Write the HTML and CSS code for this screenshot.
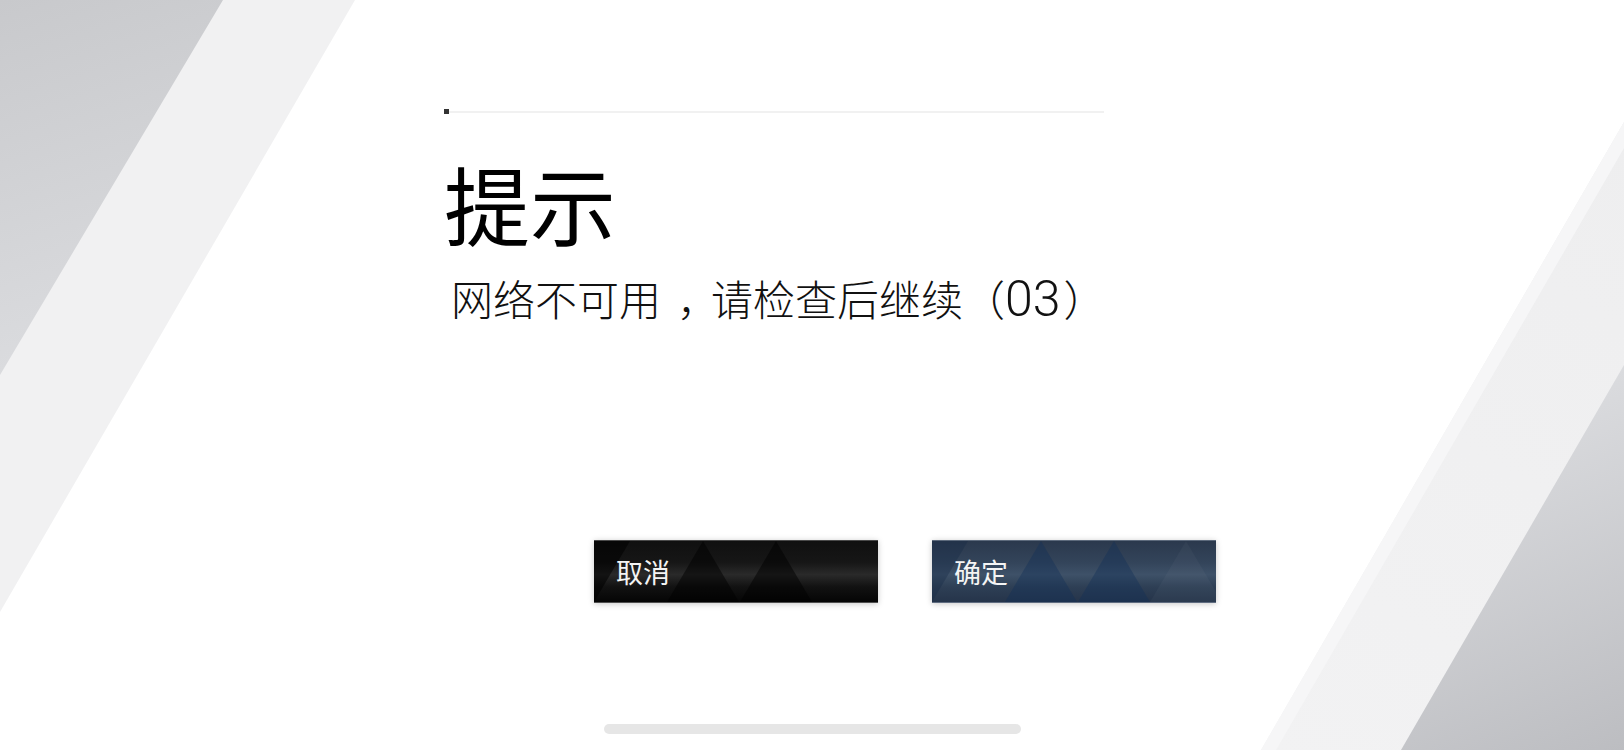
FILE: index.html
```html
<!DOCTYPE html>
<html lang="zh-CN">
<head>
<meta charset="utf-8">
<title>提示</title>
<link rel="stylesheet" href="styles.css">
</head>
<body>
<svg class="backdrop" viewBox="0 0 1624 750" preserveAspectRatio="none" aria-hidden="true">
  <defs>
    <linearGradient id="leftDark" x1="0" y1="0" x2="120" y2="375" gradientUnits="userSpaceOnUse">
      <stop offset="0" stop-color="#c8c9cc"/>
      <stop offset="1" stop-color="#dcdde0"/>
    </linearGradient>
    <linearGradient id="rightDark" x1="1480" y1="420" x2="1624" y2="750" gradientUnits="userSpaceOnUse">
      <stop offset="0" stop-color="#dbdcdf"/>
      <stop offset="1" stop-color="#bcbdc1"/>
    </linearGradient>
    <linearGradient id="rightLight" x1="1624" y1="122" x2="1261" y2="750" gradientUnits="userSpaceOnUse">
      <stop offset="0" stop-color="#eeeeef"/>
      <stop offset="1" stop-color="#f2f2f3"/>
    </linearGradient>
  </defs>
  <polygon points="0,0 355,0 0,612" fill="#f1f1f2"/>
  <polygon points="0,0 223,0 0,375" fill="url(#leftDark)"/>
  <polygon points="1624,122 1624,750 1261,750" fill="url(#rightLight)"/>
  <polygon points="1624,122 1624,148 1276,750 1261,750" fill="#f6f6f7"/>
  <polygon points="1624,365 1624,750 1401,750" fill="url(#rightDark)"/>
</svg>

<main class="screen">
  <section class="dialog">
    <div class="rule">
      <span class="rule-mark"></span>
      <span class="rule-line"></span>
    </div>
    <h1 class="title">提示</h1>
    <p class="message">网络不可用<span class="comma">，</span>请检查后继续（<span class="digits">03</span>）</p>
    <div class="actions">
      <button class="btn btn-cancel" type="button">
        <svg class="btn-pattern" viewBox="0 0 284 61" preserveAspectRatio="none" aria-hidden="true">
          <polygon points="0,0 36,0 0,61" fill="rgba(0,0,0,0.55)"/>
          <polygon points="73,61 109,0 145,61" fill="rgba(0,0,0,0.5)"/>
          <polygon points="146,61 182,0 218,61" fill="rgba(0,0,0,0.5)"/>
        </svg>
        <span class="btn-label">取消</span>
      </button>
      <button class="btn btn-confirm" type="button">
        <svg class="btn-pattern" viewBox="0 0 284 61" preserveAspectRatio="none" aria-hidden="true">
          <polygon points="0,0 36,0 0,61" fill="rgba(20,40,70,0.35)"/>
          <polygon points="73,61 109,0 145,61" fill="rgba(18,48,88,0.4)"/>
          <polygon points="146,61 182,0 218,61" fill="rgba(18,48,88,0.4)"/>
          <polygon points="218,61 254,0 290,61" fill="rgba(255,255,255,0.03)"/>
        </svg>
        <span class="btn-label">确定</span>
      </button>
    </div>
  </section>
  <div class="home-bar"></div>
</main>
</body>
</html>
```

FILE: styles.css
```css
html, body {
  margin: 0;
  padding: 0;
}

body {
  width: 1624px;
  height: 750px;
  overflow: hidden;
  background: #ffffff;
  position: relative;
  font-family: "Noto Sans CJK SC", "Noto Sans", sans-serif;
  color: #000;
}

.backdrop {
  position: absolute;
  left: 0;
  top: 0;
  width: 1624px;
  height: 750px;
  z-index: 0;
}

.screen {
  position: relative;
  z-index: 1;
  height: 750px;
  display: flex;
  flex-direction: column;
  box-sizing: border-box;
  padding-bottom: 16px;
}

.dialog {
  margin-left: 444px;
  padding-top: 109px;
  display: flex;
  flex-direction: column;
  align-items: flex-start;
}

.rule {
  display: flex;
  align-items: center;
  width: 660px;
  height: 5px;
}

.rule-mark {
  width: 5px;
  height: 5px;
  background: #333333;
}

.rule-line {
  flex: 1;
  height: 2px;
  background: #f1f1f1;
}

.title {
  margin: 46px 0 0 0;
  font-size: 86px;
  line-height: 1;
  font-weight: 400;
}

.message {
  margin: 31px 0 0 7px;
  font-size: 42px;
  line-height: 1;
  font-weight: 300;
  color: #111;
  white-space: nowrap;
  text-spacing-trim: space-all;
}

.comma {
  font-feature-settings: "halt" 1;
  padding: 0 13px 0 16px;
}

.digits {
  font-family: Roboto, "Liberation Sans", sans-serif;
  font-weight: 300;
  font-size: 50px;
  line-height: 0;
  margin-right: 3px;
}

.actions {
  display: flex;
  gap: 54px;
  margin: 221px 0 0 150px;
}

.btn {
  position: relative;
  flex: none;
  width: 284px;
  height: 63px;
  padding: 0 0 0 22px;
  margin: 0;
  border: 0;
  box-sizing: border-box;
  display: flex;
  align-items: center;
  overflow: hidden;
  box-shadow: 0 1px 6px rgba(0, 0, 0, 0.22);
  font-family: inherit;
  cursor: pointer;
}

.btn-cancel {
  background: linear-gradient(to bottom, #101010 0%, #161616 35%, #2a2a2a 55%, #121212 75%, #050505 100%);
  border-top: 1px solid #4a4a4a;
  border-bottom: 1px solid #4f4f4f;
}

.btn-confirm {
  background: linear-gradient(to bottom, #2b394d 0%, #33445a 35%, #3e5168 55%, #2e3f55 75%, #25344a 100%);
  border-top: 1px solid #5d6a7c;
  border-bottom: 1px solid #5f6c80;
}

.btn-pattern {
  position: absolute;
  left: 0;
  top: 0;
  width: 100%;
  height: 100%;
}

.btn-label {
  position: relative;
  font-size: 27px;
  line-height: 1;
  color: #f4f4f4;
}

.home-bar {
  margin: auto auto 0 auto;
  width: 417px;
  height: 10px;
  border-radius: 5px;
  background: #e6e6e6;
}
```
